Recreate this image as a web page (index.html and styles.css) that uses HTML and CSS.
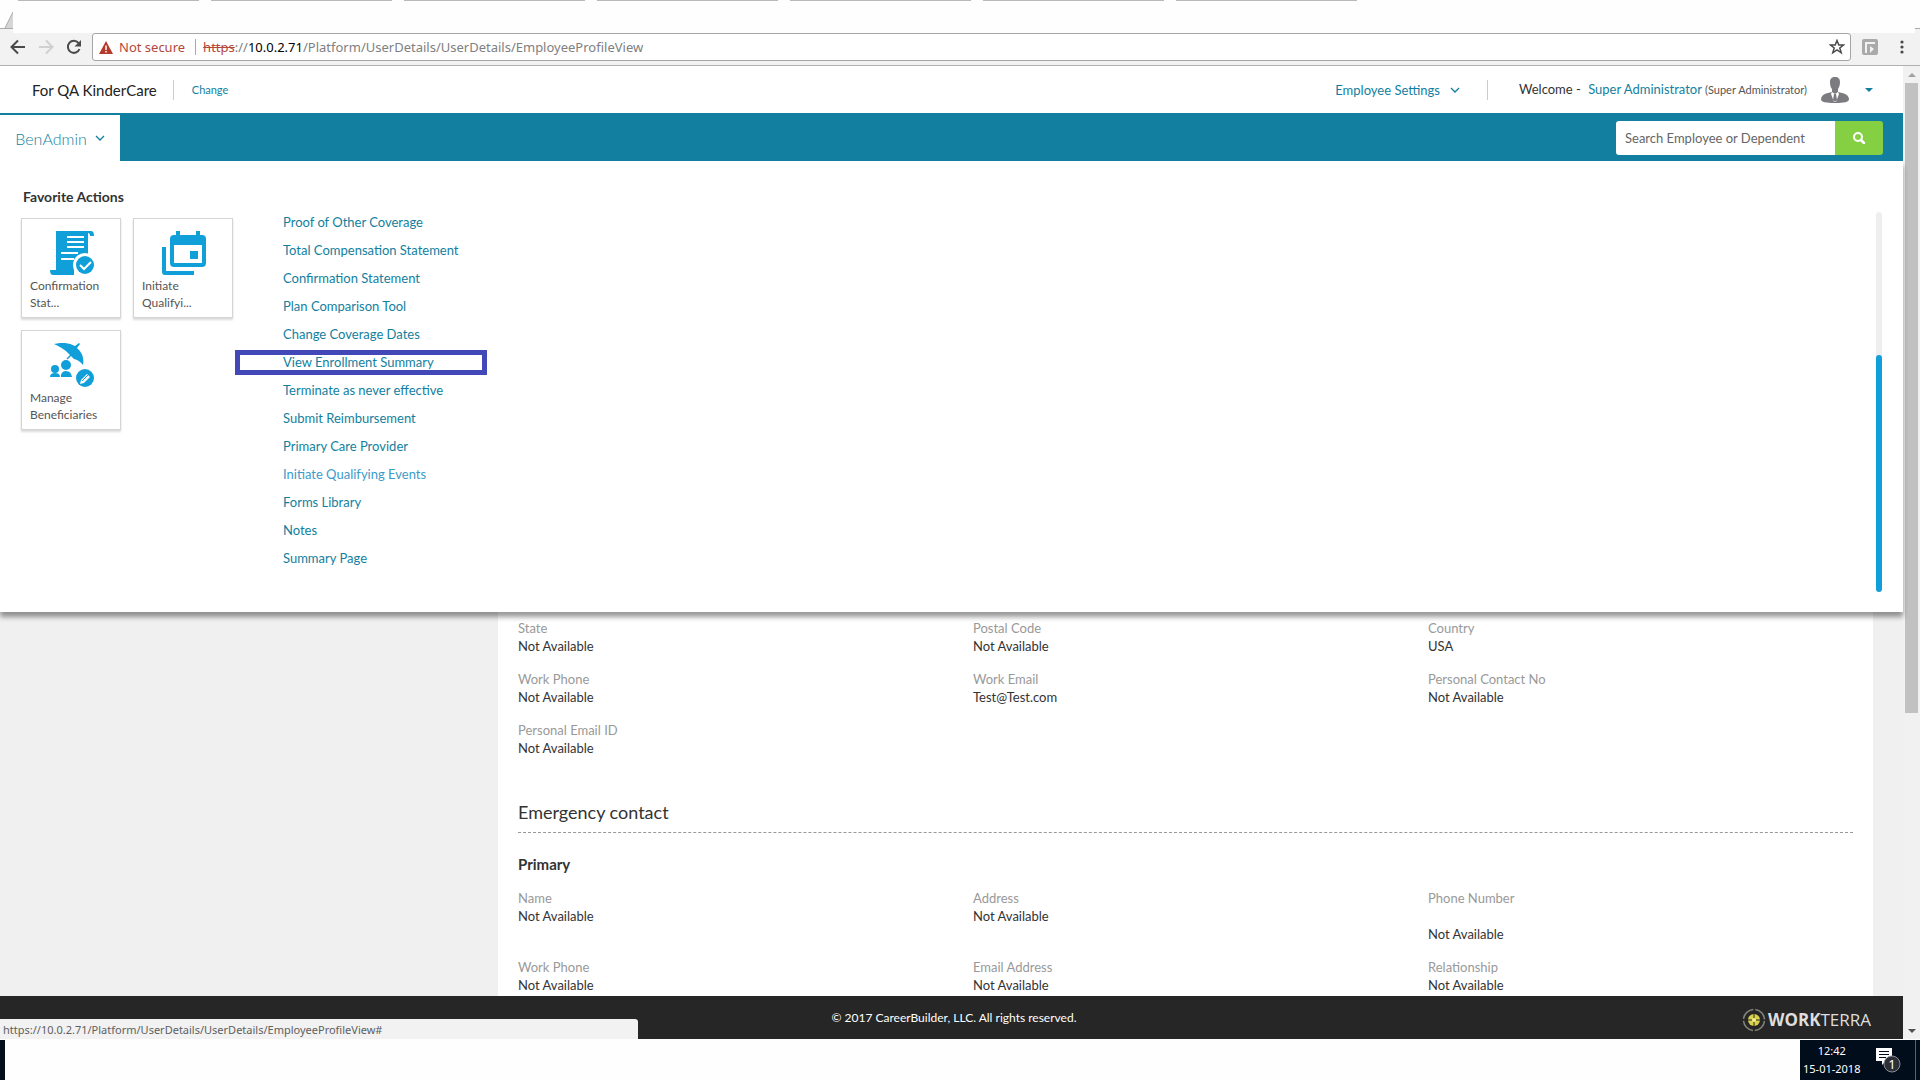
FILE: index.html
```html
<!DOCTYPE html>
<html lang="en">
<head>
    <meta charset="UTF-8">
    <meta name="viewport" content="width=device-width, initial-scale=1.0">
    <title>Employee Profile</title>
    <link rel="stylesheet" href="styles.css">
</head>
<body>
    <!-- Browser chrome -->
    <div class="tab-strip">
        <span class="tab"></span>
        <span class="tab"></span>
        <span class="tab"></span>
        <span class="tab"></span>
        <span class="tab"></span>
        <span class="tab"></span>
        <span class="tab"></span>
        <svg class="tab-edge" width="13" height="33" viewBox="0 0 13 33">
            <path d="M5 28L13 12V28z" fill="#d6d6d6"/>
            <path d="M0 29h13v4H0z" fill="#f2f2f2"/>
            <path d="M0 28.5h13M5 28L13 12" stroke="#aaa" fill="none"/>
        </svg>
        <span class="strip-end"></span>
    </div>
    <div class="toolbar">
        <div class="tools">
            <button aria-label="Back">
                <svg width="16" height="16" viewBox="0 0 16 16"><path d="M15 8H2M8 1.5L1.5 8L8 14.5" fill="none" stroke="#4a4a4a" stroke-width="2"/></svg>
            </button>
            <button aria-label="Forward" disabled>
                <svg width="16" height="16" viewBox="0 0 16 16"><path d="M1 8H14M8 1.5L14.5 8L8 14.5" fill="none" stroke="#d0d0d0" stroke-width="2"/></svg>
            </button>
            <button aria-label="Reload">
                <svg width="16" height="16" viewBox="0 0 16 16"><path d="M13.500 10A6 6 0 1 1 12.500 4" fill="none" stroke="#4a4a4a" stroke-width="2"/><path d="M15 1v6.500H8.500z" fill="#4a4a4a"/></svg>
            </button>
        </div>
        <div class="omnibox">
            <svg width="14" height="13" viewBox="0 0 14 13"><path d="M7 0L14 13H0z" fill="#b53a2b"/><path d="M7 4.500V9M7 10v1.500" stroke="#fff" stroke-width="1.500"/></svg>
            <span class="not-secure">Not secure</span>
            <span class="url"><s>https</s>://<b>10.0.2.71</b>/Platform/UserDetails/UserDetails/EmployeeProfileView</span>
            <svg width="16" height="16" viewBox="0 0 16 16"><path d="M8 1.500L9.800 6H14.500L10.800 9L12.200 13.800L8 11L3.800 13.800L5.200 9L1.500 6H6.200z" fill="none" stroke="#4a4a4a" stroke-width="1.500"/></svg>
        </div>
        <svg class="extension" width="16" height="16" viewBox="0 0 16 16"><rect width="16" height="16" rx="2" fill="#aaa"/><path d="M4 14V4h9" fill="none" stroke="#f2f2f2" stroke-width="2"/><path d="M8 7l4 3-4 4z" fill="#f2f2f2"/></svg>
        <button class="menu-dots" aria-label="Menu">
            <svg width="4" height="14" viewBox="0 0 4 14"><g fill="#4a4a4a"><circle cx="2" cy="2" r="1.600"/><circle cx="2" cy="7" r="1.600"/><circle cx="2" cy="12" r="1.600"/></g></svg>
        </button>
    </div>

    <div class="viewport">
        <div class="page">
            <header class="header">
                <span class="company">For QA KinderCare</span>
                <a class="change" href="#">Change</a>
                <a class="settings" href="#">Employee Settings
                    <svg width="10" height="6" viewBox="0 0 10 6"><path d="M1 1l4 4 4-4" fill="none" stroke="#127fa0" stroke-width="1.300"/></svg>
                </a>
                <div class="welcome">
                    <span>Welcome -</span>
                    <a href="#">Super Administrator</a>
                    <small>(Super Administrator)</small>
                </div>
                <svg class="avatar" width="28" height="26" viewBox="0 0 28 26">
                    <path d="M14 0c3.500 0 5 2 5 5 0 4-1.500 6-2 7v3l6 1.500c3 1 5 3 5 6 0 2.500-5 3.500-14 3.500S0 25 0 22.500c0-3 2-5 5-6L11 15v-3c-1-1-2-3-2-7 0-3 1.500-5 5-5z" fill="#7c7c80"/>
                    <path d="M11 15l3 2 3-2 1 2-3 8h-2l-3-8z" fill="#fff"/>
                    <path d="M13 17h2l1 6-2 2-2-2z" fill="#7c7c80"/>
                </svg>
                <svg class="caret" width="8" height="4" viewBox="0 0 8 4"><path d="M0 0h8L4 4z" fill="#127fa0"/></svg>
            </header>

            <nav class="nav">
                <button class="nav-tab">BenAdmin
                    <svg width="10" height="6" viewBox="0 0 10 6"><path d="M1 1l4 4 4-4" fill="none" stroke="#127fa0" stroke-width="1.300"/></svg>
                </button>
                <form class="search">
                    <input type="text" placeholder="Search Employee or Dependent" aria-label="Search Employee or Dependent">
                    <button type="button" aria-label="Search">
                        <svg width="12" height="12" viewBox="0 0 12 12"><circle cx="5" cy="5" r="4" fill="none" stroke="#fff" stroke-width="2"/><path d="M8 8L11 11" stroke="#fff" stroke-width="2.500" stroke-linecap="round"/></svg>
                    </button>
                </form>
            </nav>

            <div class="mega-menu">
                <section class="favorites">
                    <h2>Favorite Actions</h2>
                    <div class="cards">
                        <a class="card" href="#">
                            <svg width="44" height="44" viewBox="0 0 44 44">
                                <path d="M6 0H41q3 0 3 5h-4q0-3-2-3v24H32v13H6z" fill="#119fda"/>
                                <path d="M0 39h24v5H3q-3 0-3-5z" fill="#119fda"/>
                                <path d="M17 6h17M17 11h17M17 16h17M11 22h17M11 28h13" stroke="#fff" stroke-width="2"/>
                                <circle cx="35" cy="34" r="12" fill="#fff"/>
                                <circle cx="35" cy="34" r="9" fill="#119fda"/>
                                <path d="M30 34l4 4 7-7" fill="none" stroke="#fff" stroke-width="2"/>
                            </svg>
                            <span>Confirmation Stat...</span>
                        </a>
                        <a class="card" href="#">
                            <svg width="44" height="44" viewBox="0 0 44 44">
                                <path d="M0 16h4v24h28v4H3q-3 0-3-3z" fill="#119fda"/>
                                <path d="M14 0h4v4h16V0h4v4h2q4 0 4 4v24q0 4-4 4H12q-4 0-4-4V8q0-4 4-4h2z" fill="#119fda"/>
                                <path d="M12 14h28v18H12z" fill="#fff"/>
                                <path d="M28 20h8v8h-8z" fill="#119fda"/>
                            </svg>
                            <span>Initiate Qualifyi...</span>
                        </a>
                        <a class="card" href="#">
                            <svg width="44" height="44" viewBox="0 0 44 44">
                                <g fill="#119fda">
                                    <path d="M4 1Q16-2 25 3L29 0l1 1-3 4Q35 12 33 22 29 17 24 16L18 10Q13 5 4 1z"/>
                                    <circle cx="5" cy="26" r="4"/>
                                    <path d="M0 34q0-4 5-4 5 0 5 4z"/>
                                    <circle cx="16" cy="22" r="5"/>
                                    <path d="M11 34v-2q1-4 5-4 5 0 6 6z"/>
                                    <circle cx="35" cy="35" r="9"/>
                                </g>
                                <path d="M23 10l-6 6" stroke="#119fda" stroke-width="1.500"/>
                                <path d="M31 37l6-6 3 3-6 6-4 1z" fill="#fff"/>
                                <path d="M32 38l6-6" stroke="#119fda" stroke-width="1"/>
                            </svg>
                            <span>Manage Beneficiaries</span>
                        </a>
                    </div>
                </section>
                <ul class="links">
                    <li><a href="#">Proof of Other Coverage</a></li>
                    <li><a href="#">Total Compensation Statement</a></li>
                    <li><a href="#">Confirmation Statement</a></li>
                    <li><a href="#">Plan Comparison Tool</a></li>
                    <li><a href="#">Change Coverage Dates</a></li>
                    <li class="marked"><a href="#">View Enrollment Summary</a></li>
                    <li><a href="#">Terminate as never effective</a></li>
                    <li><a href="#">Submit Reimbursement</a></li>
                    <li><a href="#">Primary Care Provider</a></li>
                    <li><a class="active" href="#">Initiate Qualifying Events</a></li>
                    <li><a href="#">Forms Library</a></li>
                    <li><a href="#">Notes</a></li>
                    <li><a href="#">Summary Page</a></li>
                </ul>
                <div class="menu-scroll"><div class="menu-thumb"></div></div>
            </div>

            <main class="content">
                <div class="panel">
                    <dl class="fields">
                        <div><dt>State</dt><dd>Not Available</dd></div>
                        <div><dt>Postal Code</dt><dd>Not Available</dd></div>
                        <div><dt>Country</dt><dd>USA</dd></div>
                        <div><dt>Work Phone</dt><dd>Not Available</dd></div>
                        <div><dt>Work Email</dt><dd>Test@Test.com</dd></div>
                        <div><dt>Personal Contact No</dt><dd>Not Available</dd></div>
                        <div><dt>Personal Email ID</dt><dd>Not Available</dd></div>
                    </dl>
                    <h2>Emergency contact</h2>
                    <h3>Primary</h3>
                    <dl class="fields">
                        <div><dt>Name</dt><dd>Not Available</dd></div>
                        <div><dt>Address</dt><dd>Not Available</dd></div>
                        <div><dt>Phone Number</dt><dd><br>Not Available</dd></div>
                        <div><dt>Work Phone</dt><dd>Not Available</dd></div>
                        <div><dt>Email Address</dt><dd>Not Available</dd></div>
                        <div><dt>Relationship</dt><dd>Not Available</dd></div>
                    </dl>
                </div>
            </main>

            <footer class="footer">
                <span class="copyright">© 2017 CareerBuilder, LLC. All rights reserved.</span>
                <div class="brand">
                    <svg width="24" height="24" viewBox="0 0 24 24">
                        <circle cx="12" cy="12" r="10.500" fill="none" stroke="#85857c" stroke-width="1.500" stroke-dasharray="14.500 2" stroke-dashoffset="-1"/>
                        <circle cx="12" cy="12" r="6" fill="#d9d24a"/>
                        <path d="M12 5v14M5 12h14" stroke="#262626" stroke-width="1"/>
                        <circle cx="12" cy="12" r="2" fill="#f6f08a"/>
                    </svg>
                    <span><b>WORK</b>TERRA</span>
                </div>
            </footer>
            <div class="status">https://10.0.2.71/Platform/UserDetails/UserDetails/EmployeeProfileView#</div>
        </div>
        <div class="scrollbar">
            <svg width="8" height="4" viewBox="0 0 8 4"><path d="M4 0L8 4H0z" fill="#a0a0a0"/></svg>
            <div class="track"><div class="thumb"></div></div>
            <svg width="8" height="4" viewBox="0 0 8 4"><path d="M0 0h8L4 4z" fill="#505050"/></svg>
        </div>
    </div>

    <!-- Taskbar -->
    <div class="taskbar">
        <div class="start"></div>
        <div class="tray">
            <div class="clock"><span>12:42</span><span>15-01-2018</span></div>
            <svg width="26" height="26" viewBox="0 0 26 26">
                <path d="M1 1h16v13h-6l-4 4v-4H1z" fill="#fff"/>
                <path d="M4 4.500h10M4 7.500h10M4 10.500h7" stroke="#020d1c" stroke-width="1"/>
                <circle cx="17" cy="17" r="8" fill="#2b2f38" stroke="#8a8d92"/>
                <text class="badge-text" x="17" y="22" text-anchor="middle">1</text>
            </svg>
            <span class="show-desktop"></span>
        </div>
    </div>
</body>
</html>
```
FILE: styles.css
```css
* {
    box-sizing: border-box;
}
body {
    display: flex;
    flex-direction: column;
    height: 100vh;
    margin: 0;
    overflow: hidden;
    font-family: Lato, sans-serif;
    font-size: 13px;
    line-height: 18px;
    color: #333;
    background-color: #fefefe;
}
a {
    color: #127fa0;
    text-decoration: none;
}
button {
    padding: 0;
    border: none;
    background: none;
    font-family: inherit;
    cursor: pointer;
}
svg {
    display: block;
    flex-shrink: 0;
}
h2, h3, dl, dd, ul {
    margin: 0;
    padding: 0;
}

/* browser */
.tab-strip {
    position: relative;
    display: flex;
    gap: 12px;
    height: 33px;
    padding-left: 18px;
}
.tab {
    width: 181px;
    height: 1px;
    background-color: #b8b8b8;
}
.tab-edge {
    position: absolute;
    left: 0;
    top: 0;
}
.strip-end {
    position: absolute;
    right: 0;
    bottom: 0;
    width: 5px;
    height: 5px;
    border-top: 1px solid #aaa;
    background-color: #f2f2f2;
}
.toolbar {
    display: flex;
    align-items: flex-start;
    height: 33px;
    padding: 0 16px 0 10px;
    border-bottom: 1px solid #b0b0b0;
    background-color: #f2f2f2;
    font-family: "Noto Sans", sans-serif;
}
.tools {
    display: flex;
    gap: 12px;
    margin-right: 10px;
    padding-top: 6px;
}
.omnibox {
    display: flex;
    flex: 1;
    align-items: center;
    height: 28px;
    padding: 0 5px 0 6px;
    border: 1px solid #a6a6a6;
    border-radius: 3px;
    background-color: #fff;
}
.not-secure {
    margin-left: 6px;
    padding-right: 10px;
    border-right: 1px solid #aaa;
    color: #b5483b;
    line-height: 16px;
}
.url {
    flex: 1;
    padding-left: 7px;
    color: #808080;
}
.url s {
    color: #b5483b;
}
.url b {
    font-weight: 400;
    color: #000;
}
.extension {
    margin: 6px 22px 0 11px;
}
.menu-dots {
    padding-top: 7px;
}

/* page */
.viewport {
    display: flex;
    flex: 1;
    min-height: 0;
}
.page {
    position: relative;
    display: flex;
    flex: 1;
    flex-direction: column;
}
.header {
    display: flex;
    align-items: center;
    height: 47px;
    padding: 0 30px 0 32px;
    background-color: #fff;
}
.company {
    padding-right: 16px;
    border-right: 1px solid #ccc;
    font-size: 15px;
    line-height: 20px;
    color: #222;
}
.change {
    margin-left: 18px;
    font-size: 11px;
}
.settings {
    display: flex;
    align-items: center;
    gap: 10px;
    margin-left: auto;
    padding-right: 27px;
    border-right: 1px solid #ccc;
    line-height: 20px;
}
.welcome {
    margin-left: 31px;
}
.welcome a {
    margin-left: 4px;
}
.welcome small {
    font-size: 11px;
    color: #555;
}
.avatar {
    margin: 0 16px 0 14px;
}
.nav {
    display: flex;
    justify-content: space-between;
    align-items: center;
    height: 48px;
    padding: 2px 20px 0 0;
    background-color: #127fa0;
}
.nav-tab {
    display: flex;
    align-items: center;
    justify-content: center;
    gap: 8px;
    align-self: stretch;
    width: 120px;
    background-color: #fff;
    color: #127fa0;
    font-size: 16px;
    font-weight: 300;
}
.search {
    display: flex;
    width: 267px;
    height: 34px;
}
.search input {
    flex: 1;
    min-width: 0;
    padding: 0 9px;
    border: none;
    border-radius: 3px 0 0 3px;
    font-family: inherit;
    font-size: 13px;
}
.search input::placeholder {
    color: #666;
}
.search button {
    display: flex;
    align-items: center;
    justify-content: center;
    width: 48px;
    border-radius: 0 3px 3px 0;
    background-color: #84d042;
}

/* mega menu */
.mega-menu {
    position: relative;
    z-index: 1;
    display: flex;
    padding: 27px 21px 20px;
    background-color: #fff;
    box-shadow: 0 5px 5px rgba(0, 0, 0, 0.4);
}
.favorites {
    width: 214px;
}
.favorites h2 {
    padding-left: 2px;
    font-size: 14px;
    line-height: 18px;
}
.cards {
    display: flex;
    flex-wrap: wrap;
    gap: 12px;
    margin-top: 12px;
}
.card {
    width: 100px;
    height: 100px;
    padding: 12px 8px 0;
    border: 1px solid #d5d5d5;
    box-shadow: 0 2px 2px rgba(0, 0, 0, 0.15);
    font-size: 12px;
    line-height: 17px;
    color: #555;
}
.card svg {
    margin: 0 auto 2px 20px;
}
.links {
    width: 252px;
    padding: 20px 0;
    list-style: none;
}
.links li {
    height: 28px;
    padding: 5px 0 5px 48px;
}
.links .marked {
    height: 25px;
    margin: 2px 0 1px;
    padding: 0 0 0 43px;
    border: 5px solid #4348b8;
    line-height: 14px;
}
.links .active {
    color: #3d9bc9;
}
.menu-scroll {
    width: 6px;
    margin: 24px 0 0 auto;
    padding-top: 143px;
    border-radius: 3px;
    background-color: #eee;
}
.menu-thumb {
    height: 100%;
    border-radius: 3px;
    background-color: #119fda;
}

/* profile */
.content {
    flex: 1;
    min-height: 0;
    overflow: hidden;
    padding: 0 30px 0 498px;
    background-color: #f0f0f0;
}
.panel {
    min-height: 100%;
    padding: 7px 20px 0;
    background-color: #fff;
}
.fields {
    display: grid;
    grid-template-columns: repeat(3, 1fr);
    column-gap: 30px;
    row-gap: 15px;
}
.fields dt {
    color: #999;
}
.panel h2 {
    margin-top: 43px;
    padding-bottom: 8px;
    border-bottom: 1px dashed #999;
    font-size: 18px;
    font-weight: 400;
    line-height: 24px;
}
.panel h3 {
    margin: 21px 0 15px;
    font-size: 15px;
    line-height: 20px;
}
.footer {
    display: flex;
    align-items: center;
    height: 43px;
    padding-right: 32px;
    background-color: #262626;
    color: #fff;
}
.copyright {
    flex: 1;
    padding-left: 166px;
    text-align: center;
    font-size: 12px;
}
.brand {
    display: flex;
    align-items: center;
    gap: 2px;
    padding-top: 4px;
    font-family: "Open Sans", sans-serif;
    font-size: 17px;
    color: #ddd;
}
.status {
    position: absolute;
    left: 0;
    bottom: 0;
    width: 638px;
    height: 20px;
    padding-left: 3px;
    border-radius: 0 3px 0 0;
    background-color: #f2f2f2;
    color: #606060;
    font-family: "Noto Sans", sans-serif;
    font-size: 11px;
    line-height: 22px;
}
.scrollbar {
    display: flex;
    flex-direction: column;
    align-items: center;
    width: 17px;
    padding: 7px 0 6px;
    background-color: #f1f1f1;
}
.track {
    flex: 1;
    width: 13px;
    padding: 6px 0;
}
.thumb {
    height: 67%;
    background-color: #c1c1c1;
}

/* taskbar */
.taskbar {
    display: flex;
    justify-content: space-between;
    height: 41px;
    padding-top: 1px;
    font-family: "Noto Sans", sans-serif;
}
.start {
    width: 5px;
    background-color: #020d1c;
}
.tray {
    display: flex;
    align-items: center;
    width: 120px;
    padding: 0 4px 0 3px;
    background-color: #020d1c;
    color: #fff;
}
.clock {
    display: flex;
    flex-direction: column;
    align-items: center;
    margin-right: 15px;
    font-size: 11px;
}
.show-desktop {
    align-self: stretch;
    width: 1px;
    margin-left: auto;
    background-color: #5a606a;
}
.badge-text {
    font-size: 13px;
    fill: #fff;
}
```
